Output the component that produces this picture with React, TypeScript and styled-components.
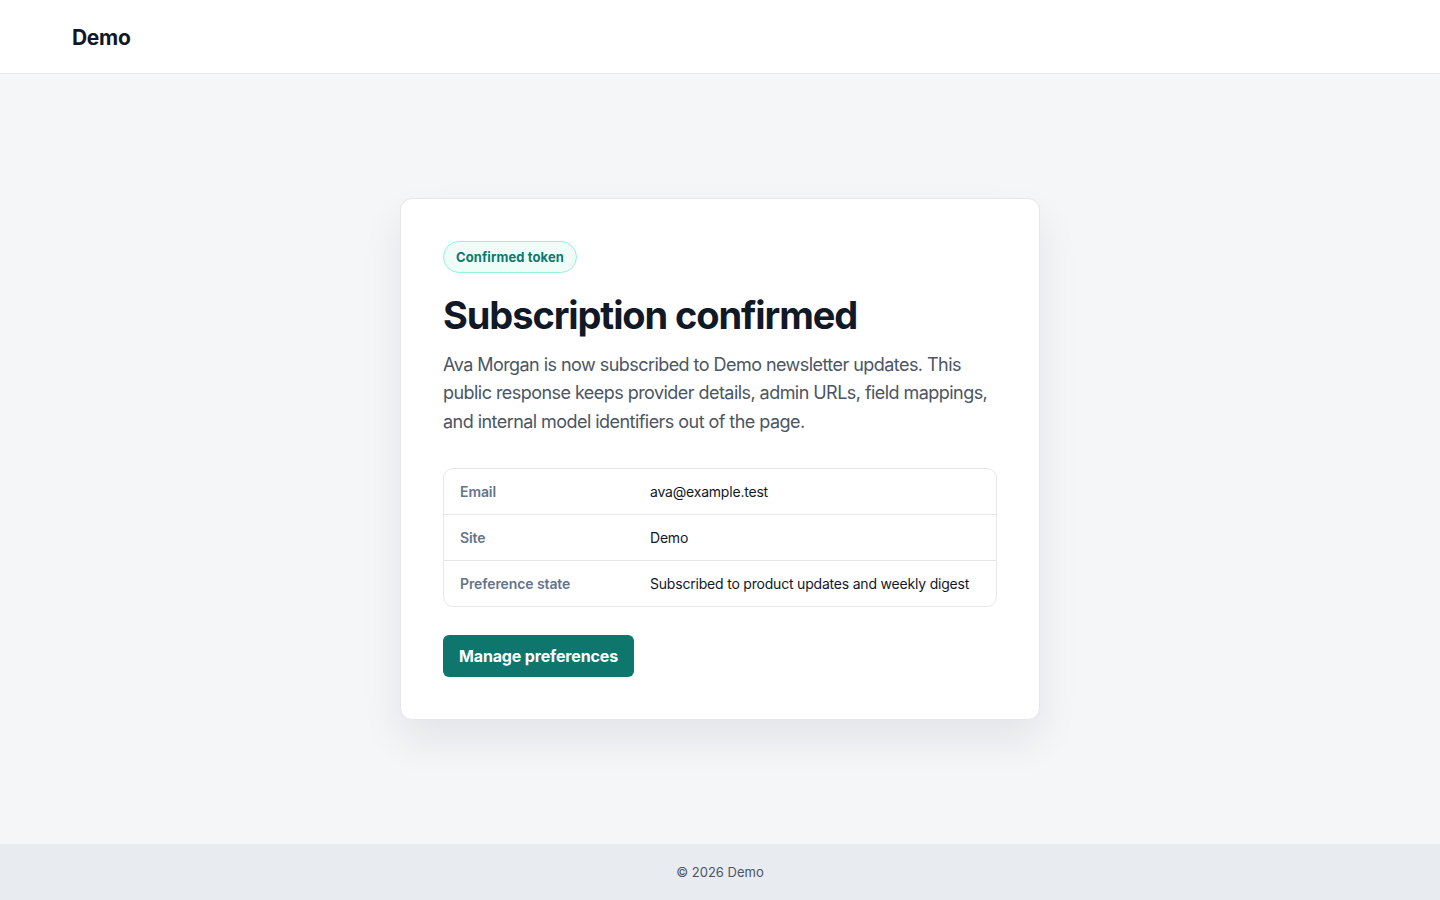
import React from 'react';
import styled, { createGlobalStyle } from 'styled-components';

const GlobalStyle = createGlobalStyle`
  * { box-sizing: border-box; }
  html, body { margin: 0; padding: 0; }
  body {
    font-family: Inter, "Noto Sans", sans-serif;
    background: #f5f6f8;
    color: #111827;
  }
`;

const Page = styled.div`
  min-height: 100vh;
  display: flex;
  flex-direction: column;
`;

const Header = styled.header`
  height: 74px;
  background: #fff;
  border-bottom: 1px solid #e5e7eb;
  display: flex;
  align-items: center;
  padding: 0 72px;
`;

const Brand = styled.div`
  font-size: 21px;
  font-weight: 700;
  color: #111827;
  letter-spacing: -0.3px;
  margin-top: 2px;
`;

const Main = styled.main`
  flex: 1;
  display: flex;
  align-items: center;
  justify-content: center;
`;

const Card = styled.section`
  width: 640px;
  background: #fff;
  border: 1px solid #e5e7eb;
  border-radius: 12px;
  padding: 42px;
  box-shadow: 0 20px 40px rgba(15, 23, 42, 0.08);
`;

const Badge = styled.span`
  display: inline-flex;
  align-items: center;
  height: 32px;
  padding: 0 12px;
  border-radius: 999px;
  background: #effdf9;
  border: 1px solid #99f0dc;
  color: #0f766e;
  font-size: 13px;
  font-weight: 700;
  letter-spacing: 0.1px;
`;

const Title = styled.h1`
  margin: 20px 0 12px;
  font-size: 38px;
  line-height: 1.2;
  font-weight: 700;
  color: #111827;
  letter-spacing: -1.1px;
`;

const Lead = styled.p`
  margin: 0 0 32px;
  font-size: 18px;
  line-height: 28.5px;
  color: #4b5563;
  letter-spacing: -0.55px;
`;

const Details = styled.dl`
  margin: 0 0 28px;
  border: 1px solid #e5e7eb;
  border-radius: 10px;
  overflow: hidden;
`;

const Row = styled.div<{ $first?: boolean; $last?: boolean }>`
  display: grid;
  grid-template-columns: 190px 1fr;
  height: ${(p) => (p.$first ? '45px' : '46px')};
  align-items: center;
  padding: 0 16px;
  border-top: ${(p) => (p.$first ? 'none' : '1px solid #e5e7eb')};
`;

const Term = styled.dt`
  font-size: 14px;
  font-weight: 600;
  color: #64748b;
  letter-spacing: -0.1px;
`;

const Value = styled.dd`
  margin: 0;
  font-size: 14px;
  color: #111827;
  letter-spacing: -0.2px;
`;

const Button = styled.button`
  height: 42px;
  padding: 0 16px;
  border: none;
  border-radius: 6px;
  background: #0f766e;
  color: #fff;
  font-family: inherit;
  font-size: 16px;
  font-weight: 700;
  letter-spacing: -0.15px;
  cursor: pointer;
`;

const Footer = styled.footer`
  height: 56px;
  background: #e8ebf0;
  display: flex;
  align-items: center;
  justify-content: center;
  font-size: 13px;
  color: #4b5563;
`;

const rows = [
  { label: 'Email', value: 'ava@example.test' },
  { label: 'Site', value: 'Demo' },
  { label: 'Preference state', value: 'Subscribed to product updates and weekly digest' },
];

export default function App() {
  return (
    <Page>
      <GlobalStyle />
      <Header>
        <Brand>Demo</Brand>
      </Header>
      <Main>
        <Card>
          <Badge>Confirmed token</Badge>
          <Title>Subscription confirmed</Title>
          <Lead>
            Ava Morgan is now subscribed to Demo newsletter updates. This public response keeps
            provider details, admin URLs, field mappings, and internal model identifiers out of the page.
          </Lead>
          <Details>
            {rows.map((r, i) => (
              <Row key={r.label} $first={i === 0} $last={i === rows.length - 1}>
                <Term>{r.label}</Term>
                <Value>{r.value}</Value>
              </Row>
            ))}
          </Details>
          <Button>Manage preferences</Button>
        </Card>
      </Main>
      <Footer>© 2026 Demo</Footer>
    </Page>
  );
}
